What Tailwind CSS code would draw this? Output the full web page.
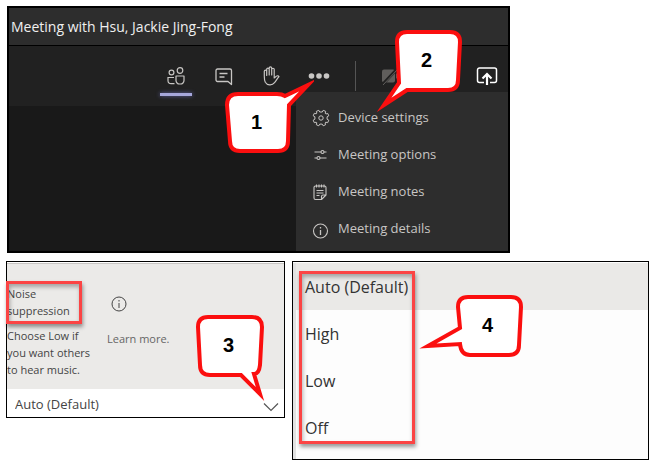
<!DOCTYPE html>
<html lang="en">
<head>
    <meta charset="UTF-8">
    <meta name="viewport" content="width=device-width, initial-scale=1.0">
    <title>Meeting noise suppression</title>
    <script src="https://cdn.jsdelivr.net/npm/@tailwindcss/browser@4"></script>
</head>
<body class="bg-white font-['Open_Sans','Noto_Sans',sans-serif]">
    <main class="flex flex-col gap-2 pt-[6px] pr-[3px] pl-[6px]">

        <!-- Meeting window -->
        <section class="relative ml-px w-full max-w-[503px] border-2 border-black bg-[#191919]">
            <header class="flex h-[38px] items-center border-b border-black bg-[#2d2d2d] px-[2px]">
                <h1 class="text-sm text-[#f0f0f0]">Meeting with Hsu, Jackie Jing-Fong</h1>
            </header>
            <div class="flex h-[60px] items-center justify-end gap-4 bg-[#212121] pr-[5px] text-[#c8c6c4]">
                <button type="button" aria-label="Participants" class="relative flex h-10 w-8 items-center justify-center">
                    <svg class="size-5" viewBox="0 0 20 20" fill="none" stroke="currentColor" stroke-width="1.2">
                        <circle cx="5.5" cy="6.500" r="2.4"/>
                        <circle cx="14" cy="4.5" r="2.8"/>
                        <path d="M10 10h8v4.500a3.500 3.500 0 0 1-3.500 3.500h-1a3.500 3.500 0 0 1-3.500-3.500z" stroke-linejoin="round"/>
                        <path d="M8 11.500H2v3a3.200 3.200 0 0 0 3.200 3.200H8.500"/>
                    </svg>
                    <span class="absolute inset-x-0 bottom-0 h-[3px] bg-[#a6a7dc] shadow-[0_0_4px_#6264a7]"></span>
                </button>
                <button type="button" aria-label="Chat" class="flex h-10 w-8 items-center justify-center">
                    <svg class="size-5" viewBox="0 0 20 20" fill="none" stroke="currentColor" stroke-width="1.3" stroke-linejoin="round">
                        <path d="M3.500 3h12.500a1.500 1.500 0 0 1 1.500 1.500V18.500l-3.500-3H3.500A1.500 1.500 0 0 1 2 14v-9.500A1.500 1.500 0 0 1 3.500 3z"/>
                        <path d="M5.500 7.500h8M5.500 11h5"/>
                    </svg>
                </button>
                <button type="button" aria-label="Raise hand" class="flex h-10 w-8 items-center justify-center">
                    <svg class="size-5" viewBox="0 0 20 20" fill="none" stroke="currentColor" stroke-width="1.2" stroke-linecap="round" stroke-linejoin="round">
                        <path d="M2.300 10V5.300a1.200 1.200 0 0 1 2.400 0V9.500 3.300a1.200 1.200 0 0 1 2.500 0V9 2.200a1.200 1.200 0 0 1 2.500 0V9 3.500a1.200 1.200 0 0 1 2.500 0V12l2.300-1.900c.9-.7 2.200-.2 2.500.6-1.700 1.700-2.900 4.200-4.500 6-2.300 3-7.300 2.800-9.200-.5-.8-1.500-1-3.500-1-6z"/>
                    </svg>
                </button>
                <button type="button" aria-label="More actions" aria-expanded="true" class="flex h-10 w-8 items-center justify-center">
                    <svg class="size-6" viewBox="0 0 24 24" fill="currentColor">
                        <circle cx="3.500" cy="12" r="2.800"/><circle cx="11" cy="12" r="2.800"/><circle cx="18.500" cy="12" r="2.800"/>
                    </svg>
                </button>
                <span class="mx-[3px] h-[30px] w-px bg-[#555]"></span>
                <button type="button" aria-label="Camera off" class="mr-12 flex h-10 w-8 items-center justify-center text-[#605e5c]">
                    <svg class="size-5" viewBox="0 0 20 20" fill="currentColor">
                        <rect x="1" y="3.500" width="13" height="13" rx="2"/>
                        <path d="M15 8l4-3v10l-4-3z"/>
                        <path d="M2 18L16 3" stroke="#212121" stroke-width="3"/>
                        <path d="M2 19L16 4" stroke="currentColor" stroke-width="1"/>
                    </svg>
                </button>
                <button type="button" aria-label="Share" class="flex h-10 w-8 items-center justify-center text-white">
                    <svg class="size-6" viewBox="0 0 24 24" fill="none" stroke="currentColor" stroke-width="1.500">
                        <path d="M9 18.500H4.500A2 2 0 0 1 2.500 16.500V6a2 2 0 0 1 2-2h15a2 2 0 0 1 2 2v10.500a2 2 0 0 1-2 2H15"/>
                        <path d="M12 21V10M7.500 14.500L12 10l4.500 4.500" stroke-width="2.200"/>
                    </svg>
                </button>
            </div>
            <div class="h-[145px]"></div>

            <nav class="absolute right-0 bottom-0 flex w-[212px] flex-col bg-[#2d2d2d] pt-[7px] pb-1 text-[13px] text-[#c8c6c4]">
                <button type="button" class="flex h-[37px] items-center gap-2 px-4 text-left">
                    <svg class="size-[18px]" viewBox="0 0 18 18" fill="none" stroke="currentColor" stroke-width="1" stroke-linejoin="round">
                        <path d="M6.800 1.300 7.700 3h2.600L11.200 1.300 13.700 2.400 13.200 4.300 14 5 15.700 4.400 16.800 6.800 15.100 7.800v2.400L16.800 11.200 15.700 13.700 13.800 13.200 13.100 14 13.600 15.700 11.200 16.800 10.200 15.100H7.800L6.800 16.800 4.300 15.700 4.800 13.800 4.100 13.200 2.300 13.700 1.200 11.200 2.900 10.200V7.800L1.200 6.800 2.300 4.300 4.200 4.800 4.900 4.100 4.300 2.400z"/>
                        <circle cx="9" cy="9" r="2.200"/>
                    </svg>
                    Device settings
                </button>
                <button type="button" class="flex h-[37px] items-center gap-2 px-4 text-left">
                    <svg class="size-[18px]" viewBox="0 0 18 18" fill="none" stroke="currentColor" stroke-width="1.100">
                        <path d="M2.500 6h6.500M12 6H14.500M2.500 12h2.500M8 12H14.500"/>
                        <circle cx="10.500" cy="6" r="1.500"/><circle cx="6.500" cy="12" r="1.500"/>
                    </svg>
                    Meeting options
                </button>
                <button type="button" class="flex h-[37px] items-center gap-2 px-4 text-left">
                    <svg class="size-[18px]" viewBox="0 0 18 18" fill="none" stroke="currentColor" stroke-width="1.100" stroke-linejoin="round">
                        <path d="M3.500 3h9A1.500 1.500 0 0 1 14 4.500V12l-4.500 4.500h-6A1.500 1.500 0 0 1 2 15V4.500A1.500 1.500 0 0 1 3.500 3zM14 12h-3a1.500 1.500 0 0 0-1.500 1.500v3"/>
                        <path d="M4.500 1.500V4.500M7 1.500V4.500M9.500 1.500V4.500M12 1.500V4.500M4.500 7.500h7M4.500 10h7M4.500 12.500h3"/>
                    </svg>
                    Meeting notes
                </button>
                <button type="button" class="flex h-[37px] items-center gap-2 px-4 text-left">
                    <svg class="mt-1 size-[18px]" viewBox="0 0 18 18" fill="none" stroke="currentColor" stroke-width="1.100">
                        <circle cx="8.500" cy="9" r="7"/>
                        <path d="M8.500 8v5M8.500 5v1.500" stroke-width="1.300"/>
                    </svg>
                    Meeting details
                </button>
            </nav>

            <div class="absolute top-[72px] left-[211px] h-[76px] w-[94px]">
                <svg class="size-full" viewBox="220 80 94 76" fill="#fff" stroke="#fb0f0f" stroke-width="4" stroke-miterlimit="12">
                    <path d="M238 94H277Q282 94 285 96L308 85 289 105 288 141Q288 151 278 151H240Q230 151 230 141L227 105Q227 94 238 94z"/>
                </svg>
                <span class="absolute top-[28px] left-[31px] font-['Liberation_Sans',sans-serif] text-xl leading-7 font-bold text-black">1</span>
            </div>
            <div class="absolute top-[20px] left-[367px] h-[84px] w-[90px]">
                <svg class="size-full" viewBox="376 28 90 84" fill="#fff" stroke="#fb0f0f" stroke-width="4" stroke-miterlimit="12">
                    <path d="M407 32H450Q460 32 460 42L458 80Q458 90 448 90H407L384 105 399 83 397 42Q397 32 407 32z"/>
                </svg>
                <span class="absolute top-[18px] left-[45px] font-['Liberation_Sans',sans-serif] text-xl leading-7 font-bold text-black">2</span>
            </div>
        </section>

        <div class="flex items-start gap-[7px]">
            <!-- Noise suppression setting -->
            <section class="relative w-[279px] shrink-0 border border-black bg-white pt-px">
                <div class="grid grid-cols-[100px_1fr] gap-y-2 border-t border-[#c8c6c4] bg-[#ebeae8] pt-[21px] pb-[11px] text-[11px] leading-[17px] text-[#444]">
                    <label for="noise">Noise<br>suppression</label>
                    <svg class="mt-[11px] ml-1 size-4" viewBox="0 0 16 16" fill="none" stroke="#444" role="img" aria-label="Info">
                        <circle cx="8" cy="8" r="7"/>
                        <path d="M8 7v5M8 4v1.500"/>
                    </svg>
                    <p>Choose Low if<br>you want others<br>to hear music.</p>
                    <p class="pt-[3px]"><a href="#" class="text-[#666]">Learn more.</a></p>
                </div>
                <div class="relative flex h-[28px] items-center">
                    <select id="noise" class="h-full w-full appearance-none bg-white pt-1 pl-2 text-[13px] text-[#444]">
                        <option>Auto (Default)</option>
                        <option>High</option>
                        <option>Low</option>
                        <option>Off</option>
                    </select>
                    <svg class="pointer-events-none absolute right-[5px] bottom-0.5 size-4" viewBox="0 0 16 16" fill="none" stroke="#555" stroke-width="1.200">
                        <path d="M1 4.500L8 11.500 15 4.500"/>
                    </svg>
                </div>
                <div class="pointer-events-none absolute top-[19px] -left-px h-[43px] w-[76px] border-3 border-[#fb4444] shadow-[1px_3px_4px_rgb(0_0_0/0.4),inset_1px_3px_4px_rgb(0_0_0/0.3)]"></div>
                <div class="pointer-events-none absolute top-[50px] left-[185px] h-[92px] w-[76px]">
                    <svg class="size-full" viewBox="192 312 76 92" fill="#fff" stroke="#fb0f0f" stroke-width="4" stroke-miterlimit="12">
                        <path d="M208 317H252Q262 317 262 327L260 365Q259 374 254 374L260 394 241 375H210Q200 375 200 365L198 327Q198 317 208 317z"/>
                    </svg>
                    <span class="absolute top-[19px] left-[31px] font-['Liberation_Sans',sans-serif] text-xl leading-7 font-bold text-black">3</span>
                </div>
            </section>

            <!-- Opened list of levels -->
            <section class="relative min-w-0 flex-1 border border-black bg-[#fdfdfd] pt-px">
                <div role="listbox" aria-label="Noise suppression" class="flex flex-col border-l-3 border-[#e1e1e1] pb-[8px] text-base text-[#333]">
                    <button type="button" role="option" aria-selected="true" class="h-[47px] bg-[#eae9e7] px-[9px] text-left">Auto (Default)</button>
                    <button type="button" role="option" class="h-[47px] px-[9px] text-left">High</button>
                    <button type="button" role="option" class="h-[47px] px-[9px] text-left">Low</button>
                    <button type="button" role="option" class="h-[47px] px-[9px] text-left">Off</button>
                </div>
                <div class="pointer-events-none absolute top-[9px] left-[6px] h-[173px] w-[116px] border-3 border-[#fb4444] shadow-[1px_3px_4px_rgb(0_0_0/0.4),inset_1px_3px_4px_rgb(0_0_0/0.3)]"></div>
                <div class="pointer-events-none absolute top-[30px] left-[123px] h-[68px] w-[110px]">
                    <svg class="size-full" viewBox="416 292 110 68" fill="#fff" stroke="#fb0f0f" stroke-width="4" stroke-miterlimit="12">
                        <path d="M468 297H511Q521 297 521 307L519 345Q519 355 509 355H470Q461 355 460 344L428 346 460 328 458 307Q458 297 468 297z"/>
                    </svg>
                    <span class="absolute top-[19px] left-[66px] font-['Liberation_Sans',sans-serif] text-xl leading-7 font-bold text-black">4</span>
                </div>
            </section>
        </div>
    </main>
</body>
</html>
